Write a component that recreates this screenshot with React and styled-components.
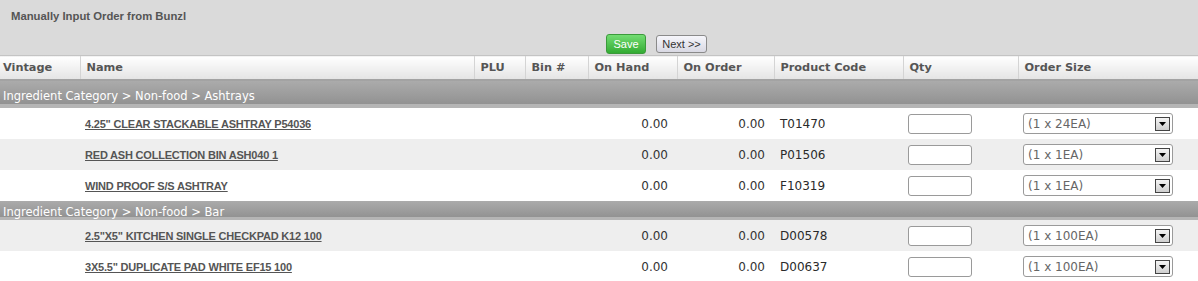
import React from 'react';
import styled, { createGlobalStyle } from 'styled-components';

const GlobalStyle = createGlobalStyle`
  body {
    margin: 0;
    background: #dadada;
    font-family: "DejaVu Sans", Verdana, sans-serif;
  }
`;

const Page = styled.div`
  width: 1198px;
  height: 281px;
  overflow: hidden;
  background: #dadada;
`;

const Heading = styled.div`
  font-family: "Liberation Sans", Arial, sans-serif;
  font-size: 11.3px;
  font-weight: bold;
  color: #555;
  padding: 10px 11px 0;
  height: 23px;
`;

const Toolbar = styled.div`
  display: flex;
  align-items: center;
  gap: 10px;
  padding-left: 606px;
  height: 22px;
`;

const SaveButton = styled.button`
  font-family: "Liberation Sans", Arial, sans-serif;
  font-size: 11px;
  color: #fff;
  width: 40px;
  height: 20px;
  padding: 0;
  border: 1px solid #3b9a3b;
  border-radius: 3px;
  background: linear-gradient(#72dc72, #34ac34);
`;

const NextButton = styled.button`
  font-family: "Liberation Sans", Arial, sans-serif;
  font-size: 11px;
  color: #333;
  width: 51px;
  height: 18px;
  padding: 0;
  border: 1px solid #8a8a8a;
  border-radius: 3px;
  background: linear-gradient(#f6f6fb, #d9d9e3);
`;

const Table = styled.table`
  width: 100%;
  border-collapse: collapse;
  table-layout: fixed;
`;

const HeadCell = styled.th`
  font-size: 11.3px;
  font-weight: bold;
  color: #555;
  text-align: left;
  height: 23px;
  padding: 0 0 0 ${p => p.$pad || 6}px;
  border-top: 1px solid #c4c4c4;
  border-bottom: 2px solid #a3a3a3;
  border-left: 1px solid #d4d4d4;
  background: linear-gradient(#ffffff, #e4e4e4);
  &:first-child {
    border-left: none;
  }
`;

const CategoryRow = styled.tr`
  td {
    height: ${p => (p.$first ? 24 : 17)}px;
    padding: ${p => (p.$first ? 3 : 2)}px 0 0 3px;
    font-size: 11.5px;
    color: #fff;
    background: linear-gradient(#ababab, #929292 85%, #b5b5b5 85%, #b5b5b5);
    white-space: nowrap;
  }
`;

const ItemRow = styled.tr`
  background: ${p => (p.$alt ? '#eeeeee' : '#ffffff')};
  td {
    height: 31px;
    padding: 0;
    font-size: 12px;
    color: #333;
  }
`;

const NameLink = styled.a`
  font-family: "Liberation Sans", Arial, sans-serif;
  font-size: 11px;
  font-weight: bold;
  letter-spacing: -0.2px;
  color: #555;
  text-decoration: underline;
  padding-left: 5px;
`;

const NumCell = styled.td`
  && {
    text-align: right;
    padding-right: ${p => p.$right}px;
  }
`;

const CodeCell = styled.td`
  && {
    padding-left: 6px;
    color: #2a2a2a;
  }
`;

const QtyInput = styled.input`
  display: block;
  margin-left: 5px;
  width: 64px;
  height: 20px;
  box-sizing: border-box;
  border: 1px solid #9a9a9a;
  border-radius: 3px;
  background: #fff;
`;

const SelectBox = styled.div`
  display: flex;
  align-items: center;
  justify-content: space-between;
  margin-left: 5px;
  width: 150px;
  height: 21px;
  box-sizing: border-box;
  border: 1px solid #9a9a9a;
  border-radius: 3px;
  background: #fff;
  padding: 0 2px 0 4px;
  font-size: 12px;
  color: #666;
`;

const DropButton = styled.span`
  display: flex;
  align-items: center;
  justify-content: center;
  width: 15px;
  height: 14px;
  box-sizing: border-box;
  border: 1px solid #444;
  background: linear-gradient(#f4f4f4, #cfcfcf);
`;

const columns = [
  { label: 'Vintage', width: 80, pad: 3 },
  { label: 'Name', width: 394 },
  { label: 'PLU', width: 51 },
  { label: 'Bin #', width: 63 },
  { label: 'On Hand', width: 89 },
  { label: 'On Order', width: 97 },
  { label: 'Product Code', width: 129 },
  { label: 'Qty', width: 115 },
  { label: 'Order Size' },
];

const groups = [
  {
    title: 'Ingredient Category > Non-food > Ashtrays',
    items: [
      { name: '4.25" CLEAR STACKABLE ASHTRAY P54036', code: 'T01470', size: '(1 x 24EA)' },
      { name: 'RED ASH COLLECTION BIN ASH040 1', code: 'P01506', size: '(1 x 1EA)' },
      { name: 'WIND PROOF S/S ASHTRAY', code: 'F10319', size: '(1 x 1EA)' },
    ],
  },
  {
    title: 'Ingredient Category > Non-food > Bar',
    items: [
      { name: '2.5"X5" KITCHEN SINGLE CHECKPAD K12 100', code: 'D00578', size: '(1 x 100EA)' },
      { name: '3X5.5" DUPLICATE PAD WHITE EF15 100', code: 'D00637', size: '(1 x 100EA)' },
    ],
  },
];

function Arrow() {
  return (
    <svg width="7" height="4" viewBox="0 0 7 4">
      <path d="M0 0h7L3.5 4z" fill="#000" />
    </svg>
  );
}

export default function App() {
  let count = 0;
  return (
    <Page>
      <GlobalStyle />
      <Heading>Manually Input Order from Bunzl</Heading>
      <Toolbar>
        <SaveButton>Save</SaveButton>
        <NextButton>Next &gt;&gt;</NextButton>
      </Toolbar>
      <Table>
        <colgroup>
          {columns.map(c => (
            <col key={c.label} style={c.width ? { width: c.width } : undefined} />
          ))}
        </colgroup>
        <thead>
          <tr>
            {columns.map(c => (
              <HeadCell key={c.label} $pad={c.pad}>{c.label}</HeadCell>
            ))}
          </tr>
        </thead>
        <tbody>
          {groups.map((g, gi) => (
            <React.Fragment key={g.title}>
              <CategoryRow $first={gi === 0}>
                <td colSpan={9}>{g.title}</td>
              </CategoryRow>
              {g.items.map(item => {
                const alt = count++ % 2 === 1;
                return (
                  <ItemRow key={item.code} $alt={alt}>
                    <td />
                    <td><NameLink href="#">{item.name}</NameLink></td>
                    <td />
                    <td />
                    <NumCell $right={9}>0.00</NumCell>
                    <NumCell $right={9}>0.00</NumCell>
                    <CodeCell>{item.code}</CodeCell>
                    <td><QtyInput /></td>
                    <td>
                      <SelectBox>
                        {item.size}
                        <DropButton><Arrow /></DropButton>
                      </SelectBox>
                    </td>
                  </ItemRow>
                );
              })}
            </React.Fragment>
          ))}
        </tbody>
      </Table>
    </Page>
  );
}
